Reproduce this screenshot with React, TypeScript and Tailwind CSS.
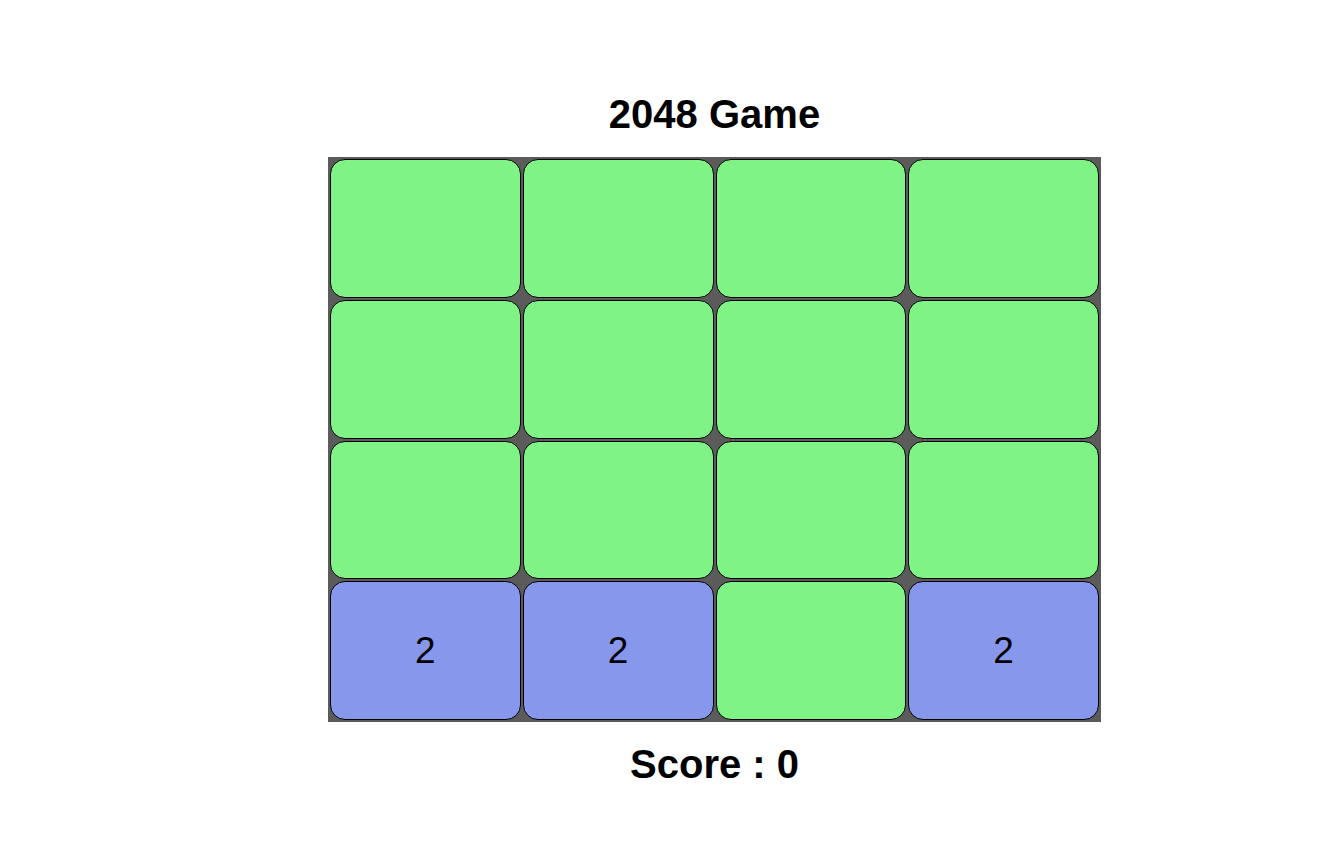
import React from "react";

const board = [
  [0, 0, 0, 0],
  [0, 0, 0, 0],
  [0, 0, 0, 0],
  [2, 2, 0, 2],
];

export default function App() {
  return (
    <div
      className="min-h-screen bg-white text-black"
      style={{ fontFamily: '"Liberation Sans", Arial, sans-serif' }}
    >
      <div className="ml-[328px] flex w-[773px] flex-col items-center pt-[91px]">
        <h1 className="text-[40px] font-bold leading-[46px]">2048 Game</h1>
        <div className="mt-[20px] grid h-[565px] w-[773px] grid-cols-4 grid-rows-4 gap-[2px] bg-[#5b5b5b] p-[2px]">
          {board.flat().map((v, i) => (
            <div
              key={i}
              className={
                "flex items-center justify-center rounded-[15px] border border-black text-[37px] " +
                (v ? "bg-[#8797eb]" : "bg-[#80f387]")
              }
            >
              {v ? v : ""}
            </div>
          ))}
        </div>
        <div className="mt-[19px] text-[40px] font-bold leading-[46px]">Score : 0</div>
      </div>
    </div>
  );
}
